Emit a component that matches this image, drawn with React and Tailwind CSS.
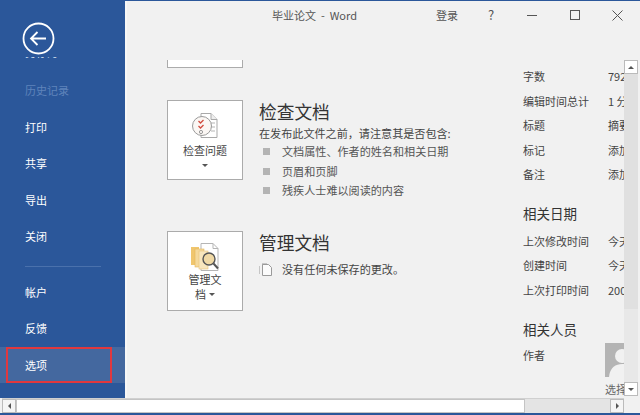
import React from "react";

const NavItem = ({ label, className = "" }) => (
  <div className={`h-[36.5px] flex items-center pl-[25px] text-[11px] text-white ${className}`}>{label}</div>
);

const InfoRow = ({ label, value, className = "" }) => (
  <div className={`flex items-center h-[24.5px] text-[11px] text-[#444] ${className}`}>
    <span className="w-[85px] shrink-0">{label}</span>
    <span>{value}</span>
  </div>
);

const InfoHeading = ({ children, className = "" }) => (
  <div className={`text-[13.5px] text-[#333] leading-[20px] ${className}`}>{children}</div>
);

const Bullet = ({ children }) => (
  <div className="flex items-center h-[19.5px] text-[11.1px] text-[#555]">
    <span className="w-[7px] h-[7px] bg-[#b4b4b4] ml-[4px] mr-[12px]"></span>
    {children}
  </div>
);

const InspectIcon = () => (
  <svg width="28" height="28" viewBox="0 0 28 28" fill="none">
    <path d="M10 1.5h10l6 6v18H10z" fill="#fff" stroke="#a9a9a9" />
    <path d="M20 1.5v6h6" stroke="#a9a9a9" fill="#eee" />
    <path d="M20 11h4M20 15h4M20 19h4" stroke="#b5b5b5" />
    <circle cx="11" cy="14" r="9.5" fill="#fbf7f4" stroke="#9a9a9a" />
    <path d="M7.5 9l2 2 3-3M7.5 14l2 2 3-3" stroke="#d14b3d" strokeWidth="1.3" />
    <circle cx="10" cy="20" r="1.6" stroke="#999" />
  </svg>
);

const ManageIcon = () => (
  <svg width="30" height="30" viewBox="0 0 30 30" fill="none">
    <path d="M11 1.5h12l5 5v22H11z" fill="#fff" stroke="#b5b5b5" />
    <path d="M23 1.5v5h5" stroke="#b5b5b5" />
    <rect x="1" y="5" width="8" height="18" fill="#f0c66e" />
    <rect x="5" y="7" width="9" height="18" fill="#f5d99b" stroke="#e3b55a" strokeWidth="0.6" />
    <rect x="9" y="9" width="9" height="18" fill="#f8e6bd" stroke="#e7c27a" strokeWidth="0.6" />
    <circle cx="19" cy="17" r="6" fill="#f0d9a5" stroke="#555" strokeWidth="1.4" />
    <path d="M23.5 21.5l4.5 5" stroke="#555" strokeWidth="2" />
  </svg>
);

const App = () => {
  return (
    <div className="w-[640px] h-[415px] overflow-hidden flex flex-col bg-[#f1f1f1] border-t border-[#2b579a]">
      <div className="flex flex-1 min-h-0 font-['Noto_Sans_CJK_SC','Noto_Sans',sans-serif]">
        {/* sidebar */}
        <div className="w-[125px] shrink-0 bg-[#2b579a] flex flex-col">
          <div className="pl-[22px] pt-[21px]">
            <svg width="33" height="33" viewBox="0 0 33 33" fill="none" stroke="#fff">
              <circle cx="16.5" cy="16.5" r="15" strokeWidth="1.8" />
              <path d="M9 16.5h15M15.5 10l-6.5 6.5 6.5 6.5" strokeWidth="1.8" />
            </svg>
          </div>
          <div className="ml-[25px] mt-[2px] h-[2px] w-[33px] overflow-hidden flex items-end text-[11px] leading-[14px] text-[#d5e1f2]">
            <span className="whitespace-nowrap">另存为</span>
          </div>
          <NavItem label="历史记录" className="mt-[13px] !text-[#5f84ba]" />
          <NavItem label="打印" />
          <NavItem label="共享" />
          <NavItem label="导出" />
          <NavItem label="关闭" />
          <div className="ml-[25px] w-[76px] h-px bg-[#4a71ac] mt-[11px] mb-[7px]"></div>
          <NavItem label="帐户" />
          <NavItem label="反馈" />
          <div className="relative bg-[#44689f]">
            <NavItem label="选项" />
            <div className="absolute left-[6px] right-[13px] top-0 bottom-0 border-[2px] border-[#e0383e]"></div>
          </div>
        </div>

        {/* content */}
        <div className="flex-1 min-w-0 flex flex-col border-l-2 border-[#f7f7f7]">
          <div className="h-[28px] shrink-0 flex items-center text-[#555] text-[11px]">
            <span className="ml-[145px] w-[164px] whitespace-pre">毕业论文  -  Word</span>
            <span className="w-[52px]">登录</span>
            <span className="w-[39px] text-[13px]">?</span>
            <svg width="10" height="10" viewBox="0 0 10 10" className="mr-[33px]" stroke="#555"><path d="M0 5.5h10" /></svg>
            <svg width="10" height="10" viewBox="0 0 10 10" className="mr-[32px]" fill="none" stroke="#555"><rect x="0.5" y="0.5" width="9" height="9" /></svg>
            <svg width="11" height="11" viewBox="0 0 11 11" stroke="#555"><path d="M0.5 0.5l10 10M10.5 0.5l-10 10" /></svg>
          </div>

          <div className="flex-1 min-h-0 flex">
            <div className="flex-1 min-w-0 overflow-hidden flex">
              {/* middle column */}
              <div className="w-[396px] shrink-0 pl-[40px] pt-[31px]">
                <div className="w-[76px] h-[8px] bg-white border border-t-0 border-[#ababab]"></div>
                <div className="flex mt-[32px]">
                  <div className="w-[76px] h-[80px] shrink-0 bg-white border border-[#ababab] flex flex-col items-center pt-[11px]">
                    <InspectIcon />
                    <span className="text-[11px] text-[#444] mt-[2px] leading-[16px]">检查问题</span>
                    <span className="mt-[6px] w-0 h-0 border-x-[3px] border-x-transparent border-t-[3px] border-t-[#555]"></span>
                  </div>
                  <div className="ml-[16px]">
                    <div className="text-[17.7px] leading-[22px] text-[#333]">检查文档</div>
                    <div className="text-[11.1px] text-[#444] leading-[18px] mt-[2px]">在发布此文件之前，请注意其是否包含:</div>
                    <Bullet>文档属性、作者的姓名和相关日期</Bullet>
                    <Bullet>页眉和页脚</Bullet>
                    <Bullet>残疾人士难以阅读的内容</Bullet>
                  </div>
                </div>
                <div className="flex mt-[30.5px]">
                  <div className="w-[76px] h-[80px] shrink-0 bg-white border border-[#ababab] flex flex-col items-center pt-[10px]">
                    <ManageIcon />
                    <span className="text-[11px] text-[#444] leading-[15px]">管理文</span>
                    <span className="text-[11px] text-[#444] leading-[15px] flex items-center">
                      档
                      <span className="ml-[3px] w-0 h-0 border-x-[3px] border-x-transparent border-t-[3px] border-t-[#555]"></span>
                    </span>
                  </div>
                  <div className="ml-[16px]">
                    <div className="text-[17.7px] leading-[22px] text-[#333]">管理文档</div>
                    <div className="flex items-center text-[11.1px] text-[#444] mt-[7px] h-[18px]">
                      <svg width="13" height="14" viewBox="0 0 13 14" fill="none" stroke="#9a9a9a" className="mr-[10px]">
                        <path d="M3.5 2.5h6l3 3v8h-9z" fill="#fbfbfb" />
                        <path d="M0.5 4.5v7M3.5 2.5v-1h5" strokeDasharray="1 1" />
                      </svg>
                      没有任何未保存的更改。
                    </div>
                  </div>
                </div>
              </div>

              {/* properties column */}
              <div className="w-[101px] shrink-0 pt-[35px] overflow-hidden whitespace-nowrap">
                <InfoRow label="字数" value="792" />
                <InfoRow label="编辑时间总计" value="1 分钟" />
                <InfoRow label="标题" value="摘要" />
                <InfoRow label="标记" value="添加标记" />
                <InfoRow label="备注" value="添加备注" />
                <InfoHeading className="mt-[16px] mb-[6px]">相关日期</InfoHeading>
                <InfoRow label="上次修改时间" value="今天" />
                <InfoRow label="创建时间" value="今天" />
                <InfoRow label="上次打印时间" value="2007" />
                <InfoHeading className="mt-[17px] mb-[4px]">相关人员</InfoHeading>
                <div className="flex">
                  <span className="w-[82px] shrink-0 text-[11px] text-[#444] leading-[24px]">作者</span>
                  <div className="flex flex-col">
                    <svg width="34" height="34" viewBox="0 0 34 34" className="shrink-0">
                      <rect width="34" height="34" fill="#b4b4b4" />
                      <circle cx="17" cy="13" r="7" fill="#f1f1f1" />
                      <path d="M4 34c1-10 7-13 13-13s12 3 13 13z" fill="#f1f1f1" />
                    </svg>
                    <span className="text-[11px] text-[#666] leading-[12px] mt-[6px]">选择</span>
                  </div>
                </div>
              </div>
            </div>

            {/* vertical scrollbar */}
            <div className="w-[14px] shrink-0 mr-[2px] mt-[31px] mb-[2px] flex flex-col bg-[#e8e8e8]">
              <div className="h-[14px] bg-white border border-[#bbb] flex items-center justify-center">
                <span className="w-0 h-0 border-x-[3px] border-x-transparent border-b-[3px] border-b-[#555]"></span>
              </div>
              <div className="h-[235px] bg-[#e0e0e0]"></div>
              <div className="flex-1"></div>
              <div className="h-[14px] bg-white border border-[#bbb] flex items-center justify-center">
                <span className="w-0 h-0 border-x-[3px] border-x-transparent border-t-[3px] border-t-[#555]"></span>
              </div>
            </div>
          </div>
        </div>
      </div>

      {/* horizontal scrollbar */}
      <div className="h-[15px] shrink-0 ml-[2px] mr-[16px] flex bg-[#e4e4e4] border-t border-[#d0d0d0]">
        <div className="w-[14px] bg-[#f5f5f5] border border-[#bbb] flex items-center justify-center">
          <span className="w-0 h-0 border-y-[3px] border-y-transparent border-r-[3px] border-r-[#555]"></span>
        </div>
        <div className="w-[509px] bg-white border border-[#c4c4c4]"></div>
        <div className="flex-1"></div>
        <div className="w-[14px] bg-[#f5f5f5] border border-[#bbb] flex items-center justify-center">
          <span className="w-0 h-0 border-y-[3px] border-y-transparent border-l-[3px] border-l-[#555]"></span>
        </div>
      </div>
      <div className="h-[2px] shrink-0 bg-[#2b579a]"></div>
    </div>
  );
};

export default App;
